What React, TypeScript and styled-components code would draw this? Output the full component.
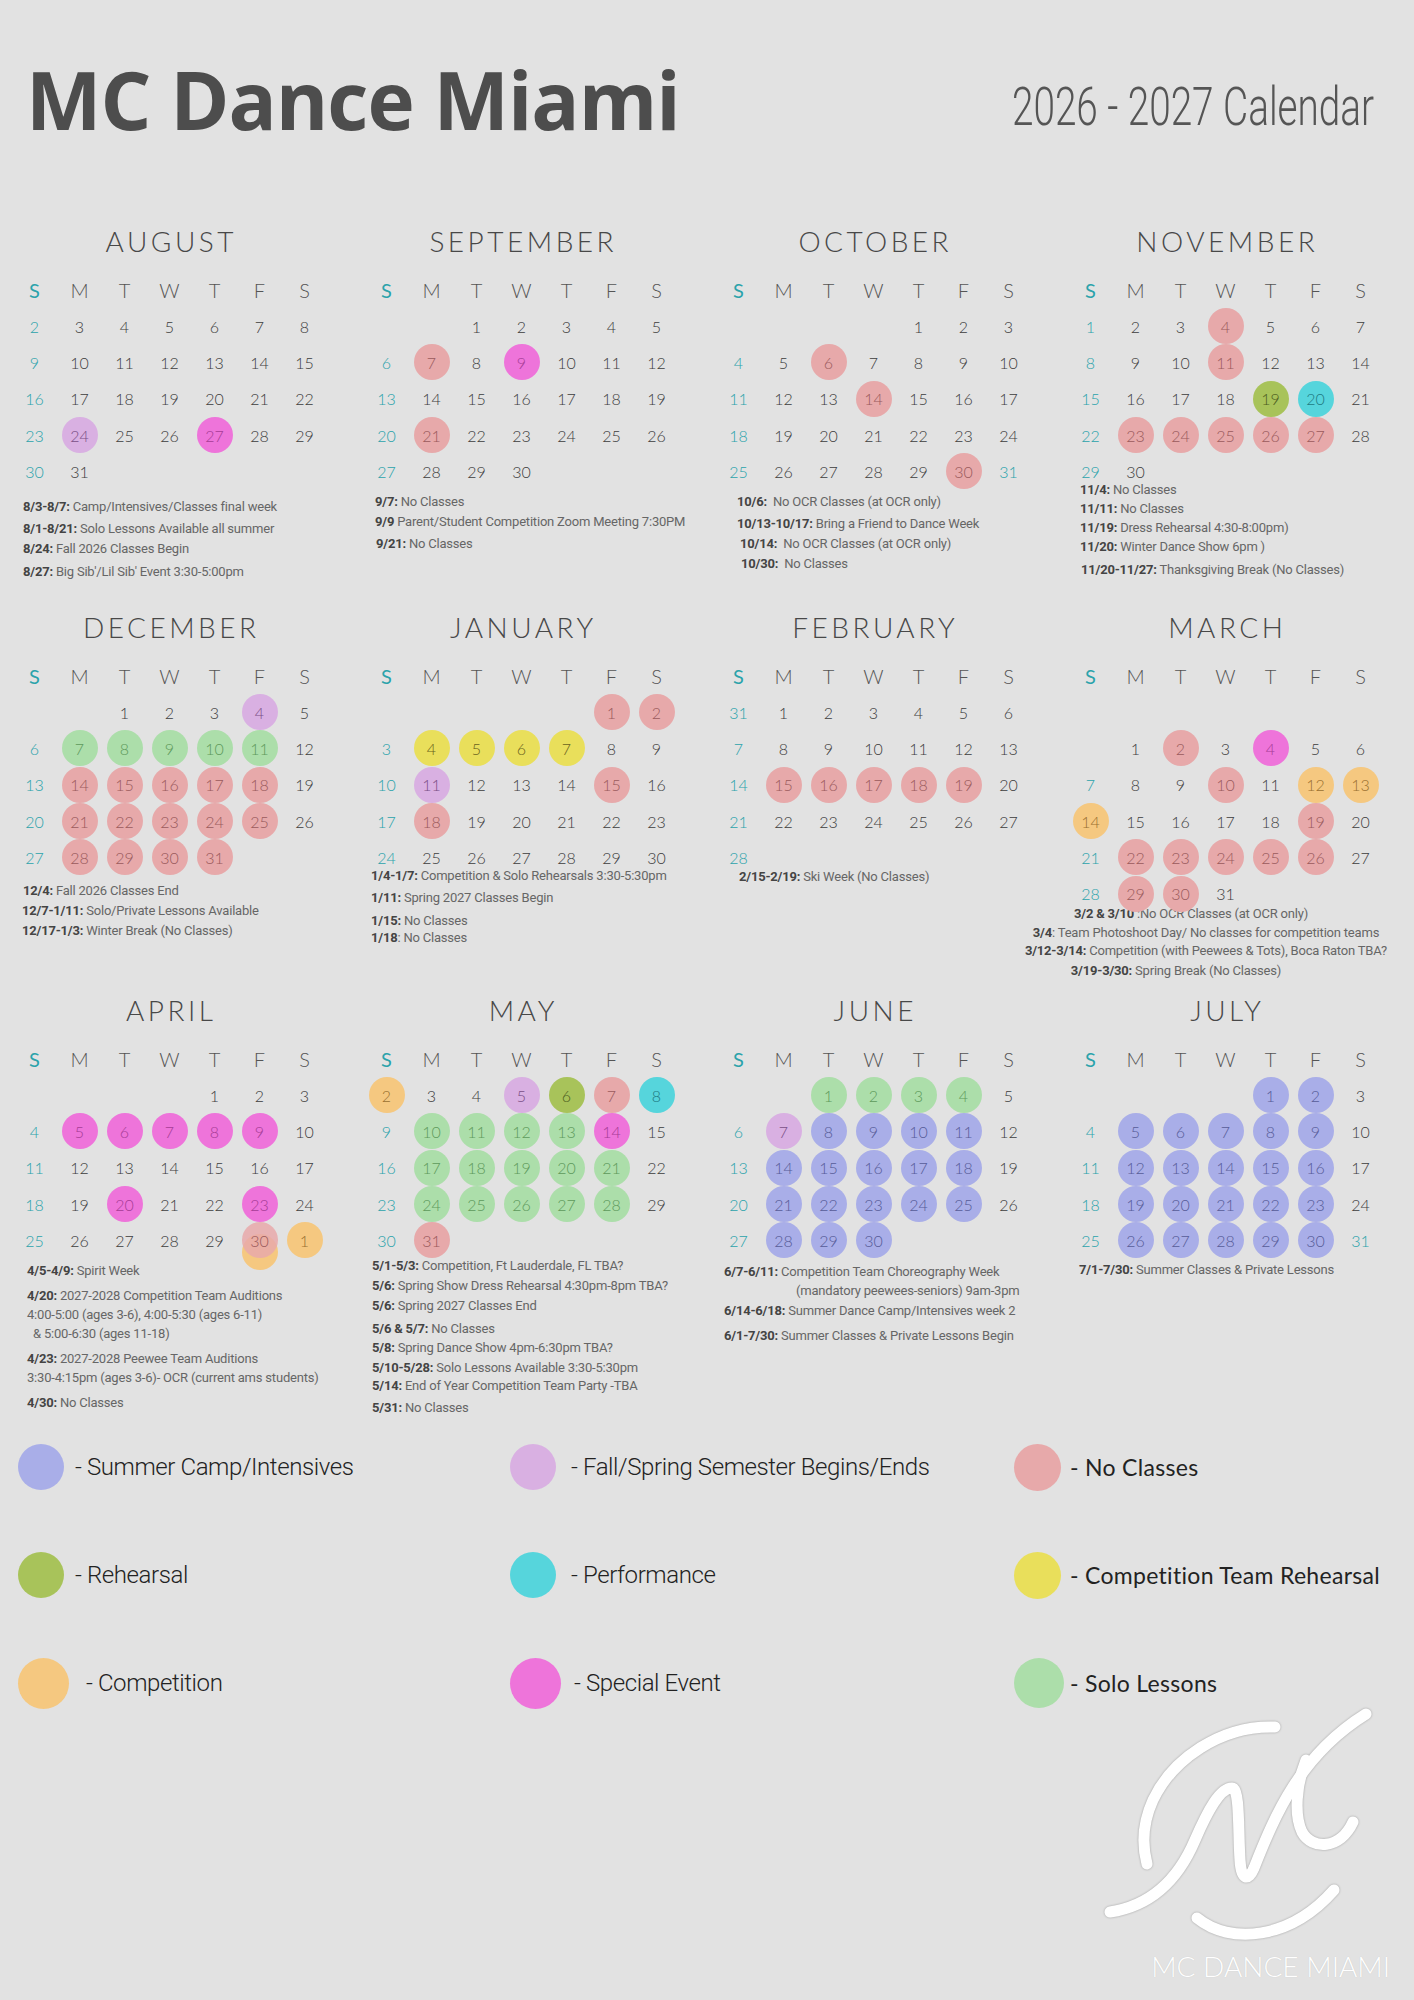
import React from "react";
import styled, { createGlobalStyle } from "styled-components";

type Kind =
  | "camp"
  | "semester"
  | "noClass"
  | "rehearsal"
  | "performance"
  | "compRehearsal"
  | "competition"
  | "special"
  | "solo";

const palette: Record<Kind, { bg: string; fg: string }> = {
  camp: { bg: "#a9aee8", fg: "#575c98" },
  semester: { bg: "#d9b0e2", fg: "#7a4f86" },
  noClass: { bg: "#e7a9aa", fg: "#9a5a5c" },
  rehearsal: { bg: "#a8c35a", fg: "#4d5e1f" },
  performance: { bg: "#56d5dc", fg: "#1e7a82" },
  compRehearsal: { bg: "#e9df5b", fg: "#6a6320" },
  competition: { bg: "#f5c880", fg: "#9a7030" },
  special: { bg: "#ee74da", fg: "#a63c96" },
  solo: { bg: "#acdeaa", fg: "#5e9a5c" },
};

interface Day {
  d: number;
  k?: Kind;
  under?: Kind;
  teal?: boolean;
}
type Week = (Day | null)[];

interface Note {
  b?: string;
  t: string;
  gap?: number;
  indent?: number;
}

interface Month {
  name: string;
  weeks: Week[];
  notes: Note[];
  notesTop: number;
  notesLeft: number;
  lineHeight?: number;
  centered?: boolean;
}

interface BuildOpts {
  lead?: Day[];
  trail?: Day[];
  blankRow?: boolean;
  tealDays?: number[];
  under?: Record<number, Kind>;
}

function build(
  firstDow: number,
  from: number,
  to: number,
  marks: Partial<Record<number, Kind>>,
  opts: BuildOpts = {}
): Week[] {
  const cells: (Day | null)[] = [];
  const lead = opts.lead ?? [];
  for (let i = 0; i < firstDow - lead.length; i++) cells.push(null);
  cells.push(...lead);
  for (let d = from; d <= to; d++) {
    cells.push({
      d,
      k: marks[d],
      under: opts.under?.[d],
      teal: opts.tealDays?.includes(d),
    });
  }
  cells.push(...(opts.trail ?? []));
  while (cells.length % 7) cells.push(null);
  const weeks: Week[] = opts.blankRow ? [Array(7).fill(null)] : [];
  for (let i = 0; i < cells.length; i += 7) weeks.push(cells.slice(i, i + 7));
  return weeks;
}

// mark a run of days with one kind
const run = (a: number, b: number, k: Kind) => {
  const o: Partial<Record<number, Kind>> = {};
  for (let i = a; i <= b; i++) o[i] = k;
  return o;
};

const rowOne: Month[] = [
  {
    name: "AUGUST",
    weeks: build(0, 2, 31, { 24: "semester", 27: "special" }),
    notesTop: 8,
    notesLeft: 11,
    notes: [
      { b: "8/3-8/7:", t: " Camp/Intensives/Classes final week" },
      { b: "8/1-8/21:", t: " Solo Lessons Available all summer", gap: 2 },
      { b: "8/24:", t: " Fall 2026 Classes Begin" },
      { b: "8/27:", t: " Big Sib'/Lil Sib' Event 3:30-5:00pm", gap: 3 },
    ],
  },
  {
    name: "SEPTEMBER",
    weeks: build(2, 1, 30, { 7: "noClass", 9: "special", 21: "noClass" }),
    notesTop: 3,
    notesLeft: 11,
    notes: [
      { b: "9/7:", t: " No Classes" },
      { b: "9/9", t: " Parent/Student Competition Zoom Meeting 7:30PM" },
      { b: "9/21:", t: " No Classes", gap: 2, indent: 1 },
    ],
  },
  {
    name: "OCTOBER",
    weeks: build(4, 1, 31, { 6: "noClass", 14: "noClass", 30: "noClass" }, { tealDays: [31] }),
    notesTop: 3,
    notesLeft: 21,
    notes: [
      { b: "10/6:", t: "  No OCR Classes (at OCR only)" },
      { b: "10/13-10/17:", t: " Bring a Friend to Dance Week", gap: 2 },
      { b: "10/14:", t: "  No OCR Classes (at OCR only)", indent: 3 },
      { b: "10/30:", t: "  No Classes", indent: 4 },
    ],
  },
  {
    name: "NOVEMBER",
    weeks: build(0, 1, 30, {
      4: "noClass",
      11: "noClass",
      19: "rehearsal",
      20: "performance",
      ...run(23, 27, "noClass"),
    }),
    notesTop: -9,
    notesLeft: 12,
    lineHeight: 19,
    notes: [
      { b: "11/4:", t: " No Classes" },
      { b: "11/11:", t: " No Classes" },
      { b: "11/19:", t: " Dress Rehearsal 4:30-8:00pm)" },
      { b: "11/20:", t: " Winter Dance Show 6pm )" },
      { b: "11/20-11/27:", t: " Thanksgiving Break (No Classes)", gap: 4, indent: 1 },
    ],
  },
];

const rowTwo: Month[] = [
  {
    name: "DECEMBER",
    weeks: build(2, 1, 31, {
      4: "semester",
      ...run(7, 11, "solo"),
      ...run(14, 18, "noClass"),
      ...run(21, 25, "noClass"),
      ...run(28, 31, "noClass"),
    }),
    notesTop: 6,
    notesLeft: 10,
    notes: [
      { b: "12/4:", t: " Fall 2026 Classes End", indent: 1 },
      { b: "12/7-1/11:", t: " Solo/Private Lessons Available" },
      { b: "12/17-1/3:", t: " Winter Break (No Classes)" },
    ],
  },
  {
    name: "JANUARY",
    weeks: build(5, 1, 30, {
      1: "noClass",
      2: "noClass",
      ...run(4, 7, "compRehearsal"),
      11: "semester",
      15: "noClass",
      18: "noClass",
    }),
    notesTop: -9,
    notesLeft: 7,
    notes: [
      { b: "1/4-1/7:", t: " Competition & Solo Rehearsals 3:30-5:30pm" },
      { b: "1/11:", t: " Spring 2027 Classes Begin", gap: 2 },
      { b: "1/15:", t: " No Classes", gap: 3 },
      { b: "1/18", t: ": No Classes", gap: -3 },
    ],
  },
  {
    name: "FEBRUARY",
    weeks: build(1, 1, 28, run(15, 19, "noClass"), { lead: [{ d: 31 }] }),
    notesTop: -8,
    notesLeft: 23,
    notes: [{ b: "2/15-2/19:", t: " Ski Week (No Classes)" }],
  },
  {
    name: "MARCH",
    weeks: build(
      1,
      1,
      31,
      {
        2: "noClass",
        4: "special",
        10: "noClass",
        12: "competition",
        13: "competition",
        14: "competition",
        19: "noClass",
        ...run(22, 26, "noClass"),
        29: "noClass",
        30: "noClass",
      },
      { blankRow: true }
    ),
    notesTop: -8,
    notesLeft: 0,
    lineHeight: 19,
    centered: true,
    notes: [
      { b: "3/2 & 3/10", t: " :No OCR Classes (at OCR only)", indent: -30 },
      { b: "3/4", t: ": Team Photoshoot Day/ No classes for competition teams" },
      { b: "3/12-3/14:", t: " Competition (with Peewees & Tots), Boca Raton TBA?", gap: -1 },
      { b: "3/19-3/30:", t: " Spring Break (No Classes)", gap: 1, indent: -60 },
    ],
  },
];

const rowThree: Month[] = [
  {
    name: "APRIL",
    weeks: build(
      4,
      1,
      30,
      { ...run(5, 9, "special"), 20: "special", 23: "special", 30: "noClass" },
      { under: { 30: "competition" }, trail: [{ d: 1, k: "competition" }] }
    ),
    notesTop: 3,
    notesLeft: 15,
    lineHeight: 19,
    notes: [
      { b: "4/5-4/9:", t: " Spirit Week" },
      { b: "4/20:", t: " 2027-2028 Competition Team Auditions", gap: 6 },
      { t: "4:00-5:00 (ages 3-6), 4:00-5:30 (ages 6-11)" },
      { t: " & 5:00-6:30 (ages 11-18)", indent: 3 },
      { b: "4/23:", t: " 2027-2028 Peewee Team Auditions", gap: 6 },
      { t: "3:30-4:15pm (ages 3-6)- OCR (current ams students)" },
      { b: "4/30:", t: " No Classes", gap: 6 },
    ],
  },
  {
    name: "MAY",
    weeks: build(0, 2, 31, {
      2: "competition",
      5: "semester",
      6: "rehearsal",
      7: "noClass",
      8: "performance",
      ...run(10, 13, "solo"),
      14: "special",
      ...run(17, 21, "solo"),
      ...run(24, 28, "solo"),
      31: "noClass",
    }),
    notesTop: -2,
    notesLeft: 8,
    notes: [
      { b: "5/1-5/3:", t: " Competition, Ft Lauderdale, FL TBA?" },
      { b: "5/6:", t: " Spring Show Dress Rehearsal 4:30pm-8pm TBA?" },
      { b: "5/6:", t: " Spring 2027 Classes End" },
      { b: "5/6 & 5/7:", t: " No Classes", gap: 3 },
      { b: "5/8:", t: " Spring Dance Show 4pm-6:30pm TBA?", gap: -1 },
      { b: "5/10-5/28:", t: " Solo Lessons Available 3:30-5:30pm" },
      { b: "5/14:", t: " End of Year Competition Team Party -TBA", gap: -2 },
      { b: "5/31:", t: " No Classes", gap: 2 },
    ],
  },
  {
    name: "JUNE",
    weeks: build(2, 1, 30, {
      ...run(1, 4, "solo"),
      7: "semester",
      ...run(8, 11, "camp"),
      ...run(14, 18, "camp"),
      ...run(21, 25, "camp"),
      ...run(28, 30, "camp"),
    }),
    notesTop: 4,
    notesLeft: 8,
    lineHeight: 19,
    notes: [
      { b: "6/7-6/11:", t: " Competition Team Choreography Week" },
      { t: "(mandatory peewees-seniors) 9am-3pm", indent: 72 },
      { b: "6/14-6/18:", t: " Summer Dance Camp/Intensives week 2", gap: 1 },
      { b: "6/1-7/30:", t: " Summer Classes & Private Lessons Begin", gap: 6 },
    ],
  },
  {
    name: "JULY",
    weeks: build(
      4,
      1,
      31,
      {
        ...run(1, 2, "camp"),
        ...run(5, 9, "camp"),
        ...run(12, 16, "camp"),
        ...run(19, 23, "camp"),
        ...run(26, 30, "camp"),
      },
      { tealDays: [31] }
    ),
    notesTop: 2,
    notesLeft: 11,
    notes: [{ b: "7/1-7/30:", t: " Summer Classes & Private Lessons" }],
  },
];

const legend: { k: Kind; label: string; size: number; gap: number; wide?: boolean }[] = [
  { k: "camp", label: "- Summer Camp/Intensives", size: 46, gap: 11 },
  { k: "semester", label: "- Fall/Spring Semester Begins/Ends", size: 46, gap: 15 },
  { k: "noClass", label: "- No Classes", size: 47, gap: 9, wide: true },
  { k: "rehearsal", label: "- Rehearsal", size: 46, gap: 11 },
  { k: "performance", label: "- Performance", size: 46, gap: 15 },
  { k: "compRehearsal", label: "- Competition Team Rehearsal", size: 47, gap: 9, wide: true },
  { k: "competition", label: "- Competition", size: 51, gap: 17 },
  { k: "special", label: "- Special Event", size: 51, gap: 13 },
  { k: "solo", label: "- Solo Lessons", size: 50, gap: 6, wide: true },
];

const DOW = ["S", "M", "T", "W", "T", "F", "S"];
const TEAL = "#2ba3ab";

const GlobalStyle = createGlobalStyle`
  html, body {
    margin: 0;
    padding: 0;
    background: #e2e2e2;
  }
  * {
    box-sizing: border-box;
  }
`;

const Page = styled.div`
  width: 1414px;
  height: 2000px;
  overflow: hidden;
  background: #e2e2e2;
`;

const Header = styled.header`
  height: 226px;
  padding: 59px 40px 0 26px;
  display: flex;
  justify-content: space-between;
  align-items: flex-start;
`;

const Brand = styled.h1`
  margin: 0;
  font-family: "Open Sans", "Liberation Sans", sans-serif;
  font-weight: 700;
  font-size: 80px;
  line-height: 80px;
  letter-spacing: -1px;
  color: #4d4d4d;
  white-space: nowrap;
`;

const YearTitle = styled.span`
  display: inline-block;
  margin-top: 22px;
  font-family: Roboto, "Liberation Sans", sans-serif;
  font-weight: 300;
  font-size: 53px;
  line-height: 53px;
  color: #555;
  white-space: nowrap;
  transform: scaleX(0.73);
  transform-origin: right top;
`;

const CalendarRow = styled.section<{ $h: number }>`
  height: ${(p) => p.$h}px;
  padding-left: 12px;
  display: grid;
  grid-template-columns: 352px 352px 352px 1fr;
  align-items: start;
`;

const MonthBlock = styled.div`
  display: flex;
  flex-direction: column;
`;

const MonthName = styled.h2`
  margin: 0 0 16px;
  width: 315px;
  height: 30px;
  padding-left: 3.5px;
  text-align: center;
  font-family: Lato, "Open Sans", sans-serif;
  font-weight: 300;
  font-size: 28px;
  line-height: 30px;
  letter-spacing: 3.5px;
  color: #484848;
`;

const DowRow = styled.div`
  display: grid;
  grid-template-columns: repeat(7, 45px);
  height: 36px;
`;

const DowCell = styled.div<{ $teal: boolean }>`
  display: flex;
  align-items: center;
  justify-content: center;
  font-family: Lato, "Open Sans", sans-serif;
  font-weight: ${(p) => (p.$teal ? 400 : 300)};
  font-size: 20px;
  color: ${(p) => (p.$teal ? TEAL : "#555")};
`;

const DaysGrid = styled.div`
  display: grid;
  grid-template-columns: repeat(7, 45px);
  grid-auto-rows: 36.3px;
`;

const DayCell = styled.div`
  position: relative;
  display: flex;
  align-items: center;
  justify-content: center;
`;

const Dot = styled.span<{ $bg: string; $dy?: number; $fade?: boolean }>`
  position: absolute;
  left: 50%;
  top: 50%;
  width: 36px;
  height: 36px;
  border-radius: 50%;
  background: ${(p) => p.$bg};
  opacity: ${(p) => (p.$fade ? 0.85 : 1)};
  transform: translate(-50%, calc(-50% + ${(p) => p.$dy ?? 0}px));
`;

const Num = styled.span<{ $color: string }>`
  position: relative;
  font-family: Lato, "Open Sans", sans-serif;
  font-weight: 300;
  font-size: 16px;
  color: ${(p) => p.$color};
`;

const NoteList = styled.div<{ $top: number; $left: number; $centered?: boolean }>`
  margin-top: ${(p) => p.$top}px;
  padding-left: ${(p) => p.$left}px;
  ${(p) =>
    p.$centered
      ? `
    width: 400px;
    margin-left: -62px;
    text-align: center;
  `
      : ""}
`;

const NoteLine = styled.div<{ $lh: number; $gap?: number; $indent?: number }>`
  margin-top: ${(p) => p.$gap ?? 0}px;
  padding-left: ${(p) => Math.max(p.$indent ?? 0, 0)}px;
  padding-right: ${(p) => Math.max(-(p.$indent ?? 0), 0)}px;
  font-family: Roboto, "Open Sans", sans-serif;
  font-size: 13px;
  line-height: ${(p) => p.$lh}px;
  letter-spacing: -0.2px;
  color: #666;
  white-space: pre;

  b {
    font-weight: 700;
    color: #444;
  }
`;

const Legend = styled.section`
  padding-left: 18px;
  display: grid;
  grid-template-columns: 492px 504px 1fr;
  grid-template-rows: repeat(3, 46px);
  row-gap: 62px;
`;

const LegendItem = styled.div<{ $gap: number }>`
  display: flex;
  align-items: center;
  gap: ${(p) => p.$gap}px;
`;

const Swatch = styled.span<{ $bg: string; $size: number }>`
  flex: none;
  width: ${(p) => p.$size}px;
  height: ${(p) => p.$size}px;
  border-radius: 50%;
  background: ${(p) => p.$bg};
`;

const LegendLabel = styled.span<{ $wide?: boolean }>`
  white-space: nowrap;
  color: #222;
  font-family: ${(p) => (p.$wide ? 'Lato, "Open Sans", sans-serif' : 'Roboto, "Open Sans", sans-serif')};
  font-weight: ${(p) => (p.$wide ? 400 : 300)};
  font-size: ${(p) => (p.$wide ? 23 : 24)}px;
  letter-spacing: ${(p) => (p.$wide ? 0.3 : -0.4)}px;
`;

const Footer = styled.footer`
  display: flex;
  justify-content: flex-end;
  padding-right: 24px;
`;

const LogoBlock = styled.div`
  display: flex;
  flex-direction: column;
  align-items: flex-end;
`;

const LogoMark = styled.svg`
  display: block;
  filter: drop-shadow(0 0 1px rgba(0, 0, 0, 0.3));
`;

const LogoText = styled.div`
  margin-top: 2px;
  font-family: Lato, "Open Sans", sans-serif;
  font-weight: 300;
  font-size: 28px;
  line-height: 29px;
  letter-spacing: 0px;
  color: #fff;
  white-space: nowrap;
  text-shadow: 0 0 1px rgba(0, 0, 0, 0.15);
`;

function Calendar({ m }: { m: Month }) {
  const lh = m.lineHeight ?? 20;
  return (
    <MonthBlock>
      <MonthName>{m.name}</MonthName>
      <DowRow>
        {DOW.map((d, i) => (
          <DowCell key={i} $teal={i === 0}>
            {d}
          </DowCell>
        ))}
      </DowRow>
      <DaysGrid>
        {m.weeks.flatMap((w, wi) =>
          w.map((day, di) => {
            if (!day) return <DayCell key={`${wi}-${di}`} />;
            const color = day.k
              ? palette[day.k].fg
              : di === 0 || day.teal
              ? TEAL
              : "#3d3d3d";
            return (
              <DayCell key={`${wi}-${di}`}>
                {day.under && <Dot $bg={palette[day.under].bg} $dy={12} />}
                {day.k && <Dot $bg={palette[day.k].bg} $fade={!!day.under} />}
                <Num $color={color}>{day.d}</Num>
              </DayCell>
            );
          })
        )}
      </DaysGrid>
      <NoteList $top={m.notesTop} $left={m.notesLeft} $centered={m.centered}>
        {m.notes.map((n, i) => (
          <NoteLine key={i} $lh={lh} $gap={n.gap} $indent={n.indent}>
            {n.b && <b>{n.b}</b>}
            {n.t}
          </NoteLine>
        ))}
      </NoteList>
    </MonthBlock>
  );
}

export default function App() {
  return (
    <Page>
      <GlobalStyle />
      <Header>
        <Brand>MC Dance Miami</Brand>
        <YearTitle>2026 - 2027 Calendar</YearTitle>
      </Header>

      <CalendarRow $h={386}>
        {rowOne.map((m) => (
          <Calendar key={m.name} m={m} />
        ))}
      </CalendarRow>
      <CalendarRow $h={383}>
        {rowTwo.map((m) => (
          <Calendar key={m.name} m={m} />
        ))}
      </CalendarRow>
      <CalendarRow $h={449}>
        {rowThree.map((m) => (
          <Calendar key={m.name} m={m} />
        ))}
      </CalendarRow>

      <Legend>
        {legend.map((l) => (
          <LegendItem key={l.k} $gap={l.gap}>
            <Swatch $bg={palette[l.k].bg} $size={l.size} />
            <LegendLabel $wide={l.wide}>{l.label}</LegendLabel>
          </LegendItem>
        ))}
      </Legend>

      <Footer>
        <LogoBlock>
          <LogoMark width="290" height="244" viewBox="1100 1706 290 244" fill="none">
            <g stroke="#fff" strokeWidth="11" strokeLinecap="round" strokeLinejoin="round">
              <path d="M1275 1727 C1220 1725 1172 1760 1153 1800 C1143 1822 1142 1845 1147 1864" />
              <path d="M1110 1912 C1150 1906 1178 1880 1195 1840 C1208 1810 1220 1788 1232 1788 C1240 1788 1238 1830 1240 1860 C1241 1880 1248 1882 1254 1868 C1275 1815 1300 1755 1366 1714" />
              <path d="M1306 1760 C1296 1785 1294 1815 1302 1832 C1312 1850 1340 1850 1353 1822" />
              <path d="M1197 1918 C1230 1945 1290 1940 1334 1890" />
            </g>
          </LogoMark>
          <LogoText>MC DANCE MIAMI</LogoText>
        </LogoBlock>
      </Footer>
    </Page>
  );
}
